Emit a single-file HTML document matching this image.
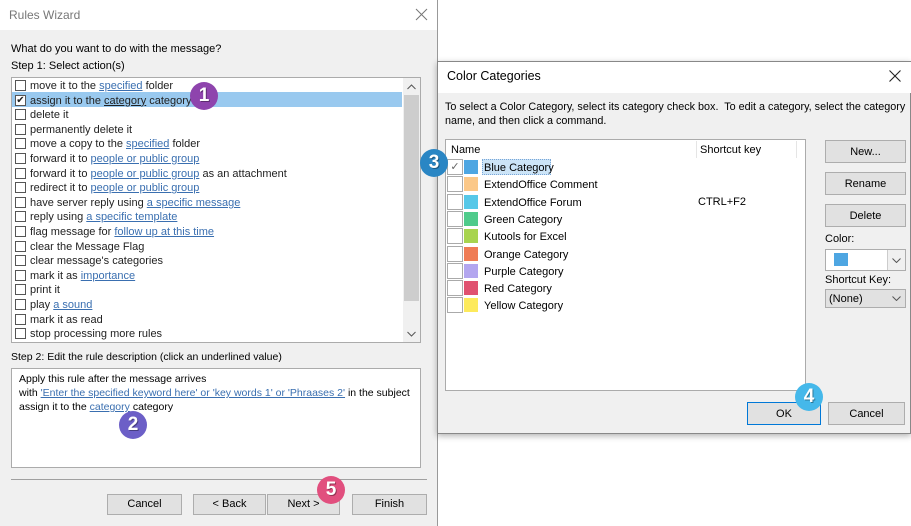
<!DOCTYPE html>
<html><head><style>
*{box-sizing:border-box;margin:0;padding:0}
body{width:911px;height:526px;background:#fff;position:relative;overflow:hidden;font-family:"Liberation Sans",sans-serif;font-size:11px;color:#000}
.a{position:absolute}
a,.u{color:#3a6fb0;text-decoration:underline}
.btn{position:absolute;background:#e1e1e1;border:1px solid #adadad;text-align:center;font-size:11px;line-height:19px}
.cb{position:absolute;width:11px;height:11px;border:1px solid #555;background:#fff}
.row{position:absolute;left:14px;height:14.6px;width:388px;line-height:15px;white-space:nowrap;color:#222}
.row .cb{left:1px;top:2px}
.row span.t{position:absolute;left:16px;top:1px}
.badge{position:absolute;width:28px;height:28px;border-radius:50%;color:#fff;font-size:19px;font-weight:bold;text-align:center;line-height:28px;text-shadow:1px 1px 0 rgba(0,0,0,.35)}
.crow{position:absolute;left:447px;height:17px;line-height:18px;white-space:nowrap}
.crow .cb{left:0;top:0;width:16px;height:16px;border:1px solid #aaa}
.crow .sw{position:absolute;left:17px;top:1px;width:14px;height:14px}
.crow .t{position:absolute;left:37px}
</style></head><body>
<div class="a" style="left:0;top:0;width:438px;height:526px;background:#f0f0f0;border-right:1px solid #999"></div>
<div class="a" style="left:0;top:0;width:437px;height:30px;background:#fff"></div>
<div class="a" style="left:9px;top:8px;font-size:12px;color:#777">Rules Wizard</div>
<svg class="a" style="left:415px;top:8px" width="13" height="13"><path d="M1 1L12 12M12 1L1 12" stroke="#777" stroke-width="1"/></svg>
<div class="a" style="left:11px;top:43px">What do you want to do with the message?</div>
<div class="a" style="left:11px;top:60px">Step 1: Select action(s)</div>
<div class="a" style="left:11px;top:77px;width:410px;height:266px;background:#fff;border:1px solid #ababab"></div>
<div class="a" style="left:403px;top:78px;width:17px;height:264px;background:#f0f0f0"></div>
<div class="a" style="left:404px;top:95px;width:15px;height:206px;background:#cdcdcd"></div>
<svg class="a" style="left:407px;top:84px" width="9" height="6"><path d="M0.5 5L4.5 1L8.5 5" stroke="#555" fill="none"/></svg>
<svg class="a" style="left:407px;top:331px" width="9" height="6"><path d="M0.5 1L4.5 5L8.5 1" stroke="#555" fill="none"/></svg>
<div class="a" style="left:12px;top:92px;width:390px;height:14.6px;background:#99c9ef"></div>
<div class="row" style="top:78px"><div class="cb"></div><span class="t">move it to the <a>specified</a> folder</span></div>
<div class="row" style="top:92.6px"><div class="cb" style="font-size:10px;line-height:9px;text-align:center">✔</div><span class="t">assign it to the <span style="text-decoration:underline">category</span> category</span></div>
<div class="row" style="top:107.2px"><div class="cb"></div><span class="t">delete it</span></div>
<div class="row" style="top:121.8px"><div class="cb"></div><span class="t">permanently delete it</span></div>
<div class="row" style="top:136.4px"><div class="cb"></div><span class="t">move a copy to the <a>specified</a> folder</span></div>
<div class="row" style="top:151px"><div class="cb"></div><span class="t">forward it to <a>people or public group</a></span></div>
<div class="row" style="top:165.6px"><div class="cb"></div><span class="t">forward it to <a>people or public group</a> as an attachment</span></div>
<div class="row" style="top:180.2px"><div class="cb"></div><span class="t">redirect it to <a>people or public group</a></span></div>
<div class="row" style="top:194.8px"><div class="cb"></div><span class="t">have server reply using <a>a specific message</a></span></div>
<div class="row" style="top:209.4px"><div class="cb"></div><span class="t">reply using <a>a specific template</a></span></div>
<div class="row" style="top:224px"><div class="cb"></div><span class="t">flag message for <a>follow up at this time</a></span></div>
<div class="row" style="top:238.6px"><div class="cb"></div><span class="t">clear the Message Flag</span></div>
<div class="row" style="top:253.2px"><div class="cb"></div><span class="t">clear message's categories</span></div>
<div class="row" style="top:267.8px"><div class="cb"></div><span class="t">mark it as <a>importance</a></span></div>
<div class="row" style="top:282.4px"><div class="cb"></div><span class="t">print it</span></div>
<div class="row" style="top:297px"><div class="cb"></div><span class="t">play <a>a sound</a></span></div>
<div class="row" style="top:311.6px"><div class="cb"></div><span class="t">mark it as read</span></div>
<div class="row" style="top:326.2px"><div class="cb"></div><span class="t">stop processing more rules</span></div>
<div class="a" style="left:11px;top:351px;font-size:10.5px">Step 2: Edit the rule description (click an underlined value)</div>
<div class="a" style="left:11px;top:368px;width:410px;height:100px;background:#fff;border:1px solid #ababab;padding:3px 7px;font-size:10.5px;line-height:14px">Apply this rule after the message arrives<br>with <a>'Enter the specified keyword here' or 'key words 1' or 'Phraases 2'</a> in the subject<br>assign it to the <a>category</a> category</div>
<div class="a" style="left:11px;top:479px;width:416px;height:1px;background:#a0a0a0"></div>
<div class="btn" style="left:107px;top:494px;width:75px;height:21px">Cancel</div>
<div class="btn" style="left:193px;top:494px;width:73px;height:21px">&lt; Back</div>
<div class="btn" style="left:267px;top:494px;width:73px;height:21px">Next &gt;</div>
<div class="btn" style="left:352px;top:494px;width:75px;height:21px">Finish</div>

<div class="a" style="left:437px;top:61px;width:474px;height:373px;background:#f0f0f0;border:1px solid #888;box-shadow:0 2px 6px rgba(0,0,0,.3)"></div>
<div class="a" style="left:438px;top:62px;width:473px;height:31px;background:#fff"></div>
<div class="a" style="left:447px;top:69px;font-size:12.5px">Color Categories</div>
<svg class="a" style="left:889px;top:70px" width="12" height="12"><path d="M0.5 0.5L11.5 11.5M11.5 0.5L0.5 11.5" stroke="#222" stroke-width="1.1"/></svg>
<div class="a" style="left:445px;top:100px;font-size:10.8px;line-height:14px">To select a Color Category, select its category check box.&nbsp; To edit a category, select the category<br>name, and then click a command.</div>
<div class="a" style="left:445px;top:139px;width:361px;height:252px;background:#fff;border:1px solid #ababab"></div>
<div class="a" style="left:696px;top:141px;width:1px;height:17px;background:#e5e5e5"></div>
<div class="a" style="left:796px;top:141px;width:1px;height:17px;background:#e5e5e5"></div>
<div class="a" style="left:451px;top:144px">Name</div>
<div class="a" style="left:700px;top:144px">Shortcut key</div>
<div class="a" style="left:482px;top:159px;width:69px;height:16px;background:#cce4f7;border:1px dotted #7aa7d8"></div>
<div class="crow" style="top:159px"><div class="cb" style="color:#666;text-align:center;line-height:14px">✓</div><div class="sw" style="background:#4ea6e2"></div><span class="t">Blue Category</span></div>
<div class="crow" style="top:176.3px"><div class="cb"></div><div class="sw" style="background:#fbc889"></div><span class="t">ExtendOffice Comment</span></div>
<div class="crow" style="top:193.6px"><div class="cb"></div><div class="sw" style="background:#57c8e8"></div><span class="t">ExtendOffice Forum</span></div>
<div class="crow" style="top:210.9px"><div class="cb"></div><div class="sw" style="background:#4fcb8b"></div><span class="t">Green Category</span></div>
<div class="crow" style="top:228.2px"><div class="cb"></div><div class="sw" style="background:#a8d44f"></div><span class="t">Kutools for Excel</span></div>
<div class="crow" style="top:245.5px"><div class="cb"></div><div class="sw" style="background:#ef7c55"></div><span class="t">Orange Category</span></div>
<div class="crow" style="top:262.8px"><div class="cb"></div><div class="sw" style="background:#b3a6ef"></div><span class="t">Purple Category</span></div>
<div class="crow" style="top:280.1px"><div class="cb"></div><div class="sw" style="background:#e05270"></div><span class="t">Red Category</span></div>
<div class="crow" style="top:297.4px"><div class="cb"></div><div class="sw" style="background:#fdea5c"></div><span class="t">Yellow Category</span></div>
<div class="a" style="left:698px;top:196px">CTRL+F2</div>
<div class="btn" style="left:825px;top:140px;width:81px;height:23px;line-height:22px">New...</div>
<div class="btn" style="left:825px;top:172px;width:81px;height:23px;line-height:22px">Rename</div>
<div class="btn" style="left:825px;top:204px;width:81px;height:23px;line-height:22px">Delete</div>
<div class="a" style="left:825px;top:233px">Color:</div>
<div class="a" style="left:825px;top:249px;width:81px;height:22px;background:#fff;border:1px solid #adadad"></div>
<div class="a" style="left:834px;top:253px;width:14px;height:13px;background:#4ea6e2"></div>
<div class="a" style="left:887px;top:250px;width:18px;height:20px;background:#f0f0f0;border-left:1px solid #ccc"></div>
<svg class="a" style="left:892px;top:258px" width="9" height="5"><path d="M0.5 0.5L4.5 4.5L8.5 0.5" stroke="#555" fill="none"/></svg>
<div class="a" style="left:825px;top:274px">Shortcut Key:</div>
<div class="a" style="left:825px;top:289px;width:81px;height:19px;background:#e1e1e1;border:1px solid #adadad;padding-left:3px;line-height:18px">(None)</div>
<svg class="a" style="left:892px;top:296px" width="9" height="5"><path d="M0.5 0.5L4.5 4.5L8.5 0.5" stroke="#555" fill="none"/></svg>
<div class="btn" style="left:747px;top:402px;width:74px;height:23px;line-height:22px;border:1px solid #0078d7">OK</div>
<div class="btn" style="left:828px;top:402px;width:77px;height:23px;line-height:22px">Cancel</div>

<div class="badge" style="left:190px;top:82px;background:#8e44ad">1</div>
<div class="badge" style="left:119px;top:411px;background:#6c5fc7">2</div>
<div class="badge" style="left:420px;top:149px;background:#2a86c4">3</div>
<div class="badge" style="left:795px;top:383px;background:#45b8ea">4</div>
<div class="badge" style="left:317px;top:476px;background:#e14f7e">5</div>
</body></html>
